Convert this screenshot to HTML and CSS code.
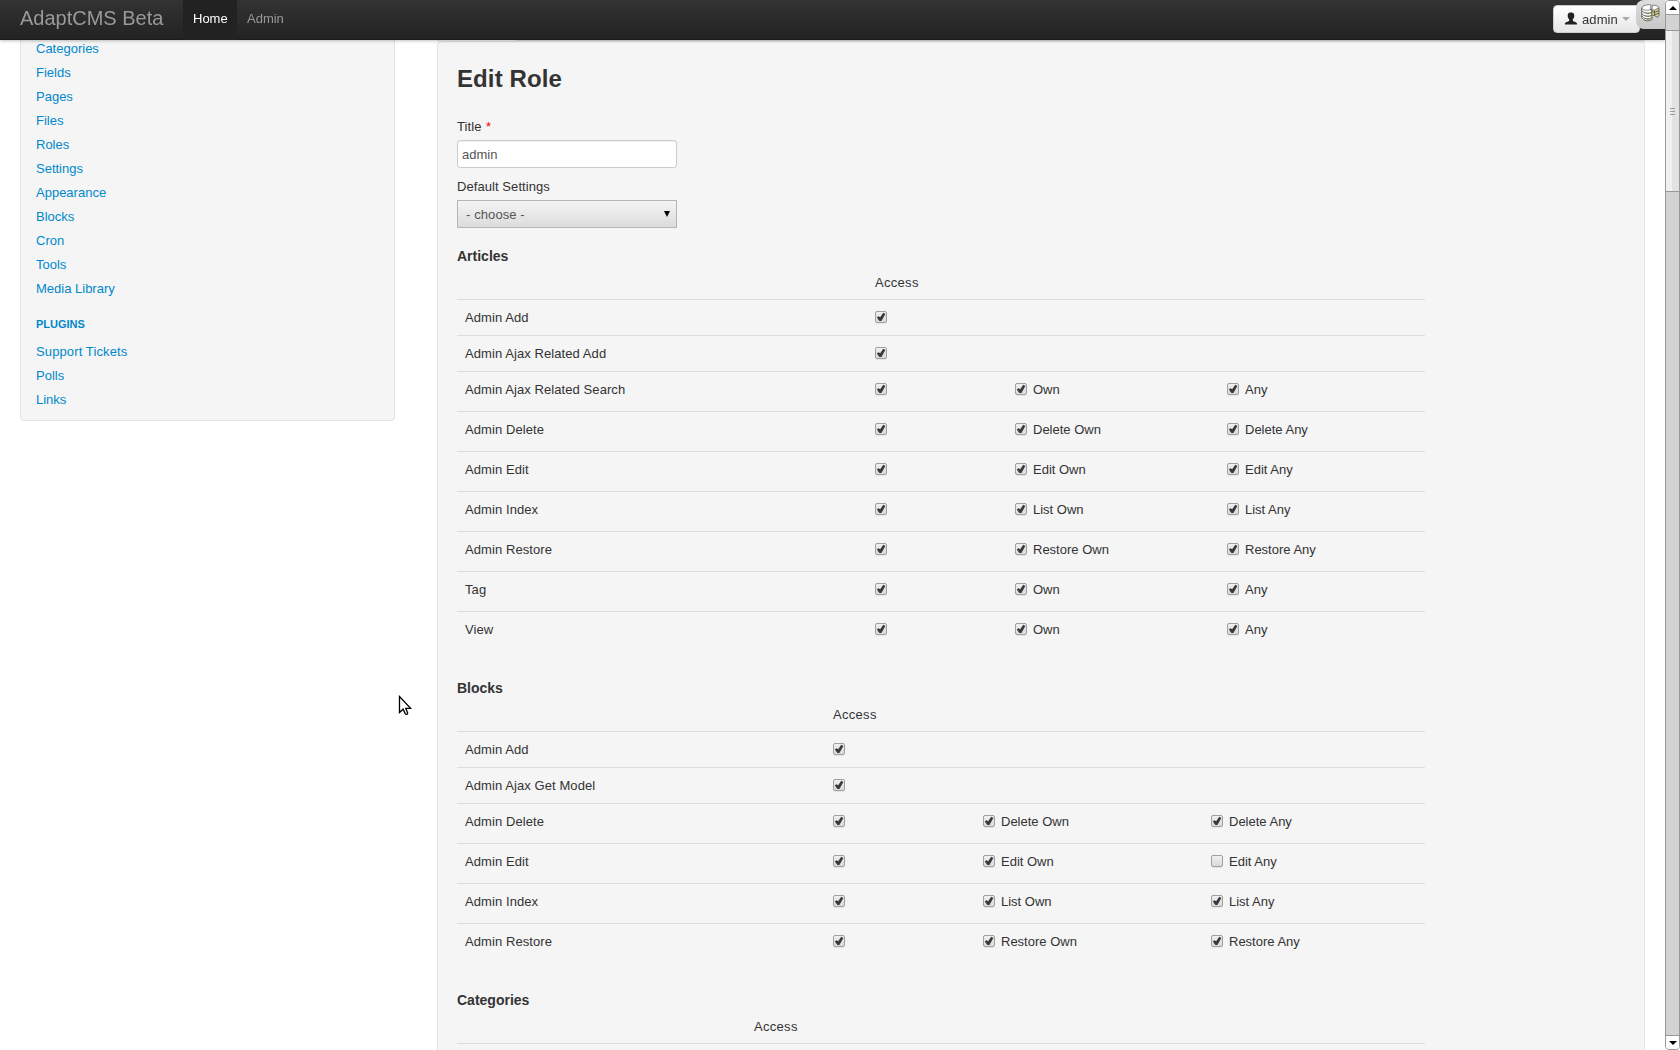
FILE: index.html
```html
<!DOCTYPE html>
<html lang="en">
<head>
<meta charset="utf-8">
<title>AdaptCMS Beta</title>
<link rel="stylesheet" href="styles.css">
</head>
<body>
<header class="navbar">
  <a class="brand">AdaptCMS Beta</a>
  <nav class="nav"><a class="active">Home</a><a>Admin</a></nav>
  <button class="user-btn" type="button">
    <svg width="14" height="14" viewBox="0 0 14 14"><path fill="#222" d="M6.600.6C4.300.6 3.600 2 3.700 4c.1 1.700.8 2.800 1.500 3.400v1.300C4.400 9.700.9 9.900.9 11.700v.9h12.200v-.9c0-1.800-3.500-2-4.300-3V7.400c.7-.6 1.400-1.700 1.500-3.400C10.400 2 9.500.6 7.400.6z"/></svg>
    <span>admin</span><i class="caret"></i>
  </button>
  <div class="debug-tab">
    <svg width="19" height="18" viewBox="0 0 19 18">
      <path fill="#fff" stroke="#555" stroke-width=".9" d="M.8 4v9.500c1.500 3.600 7.500 4 10.200 2.200V6z"/>
      <path fill="none" stroke="#b9b964" stroke-width="1.100" d="M4.500 8.800c2 .7 4.500.6 6 .1M4.500 11.800c2 .7 4.500.6 6 .1M4.500 14.800c2 .7 4.500.6 6 .1"/>
      <path fill="none" stroke="#555" stroke-width=".9" d="M.8 6.500c1.500 3 7.500 3.500 10.200 1.500M.8 9.500c1.500 3 7.500 3.500 10.200 1.500M.8 12c1.500 3 7.500 3.500 10.200 1.500"/>
      <path fill="#fff" stroke="#666" stroke-width=".8" d="M.8 4C1.500 1.500 6 .4 10 .9L9.500 5.700C6 6.800 1.500 6.300.8 4z"/>
      <path fill="#d4d483" stroke="#555" stroke-width=".8" d="M10.800 5.200l7.200-1.500v8l-1.500 1.600-3-1.700-2.700-.8z"/>
      <path fill="none" stroke="#555" stroke-width=".9" d="M11 7l2.500 1.500L18 6.500M13.500 11L18 9M13.500 6.500v5"/>
      <path fill="#fff" stroke="#666" stroke-width=".8" d="M11.500 1.200c3 0 6 .8 6.500 2.500l-4.500 2.500-2.700-1z"/>
    </svg>
  </div>
</header>

<div class="page">
  <aside class="sidebar">
    <ul>
      <li><a>Categories</a></li><li><a>Fields</a></li><li><a>Pages</a></li><li><a>Files</a></li>
      <li><a>Roles</a></li><li><a>Settings</a></li><li><a>Appearance</a></li><li><a>Blocks</a></li>
      <li><a>Cron</a></li><li><a>Tools</a></li><li><a>Media Library</a></li>
    </ul>
    <h5>Plugins</h5>
    <ul><li><a class="spaced">Support Tickets</a></li><li><a>Polls</a></li><li><a>Links</a></li></ul>
  </aside>

  <div class="content">
    <div class="tabs"><span class="tab-active"></span></div>
    <main class="well">
      <h2>Edit Role</h2>
      <form>
        <label class="field-label" for="title">Title <em>*</em></label>
        <input class="text-input" id="title" type="text" value="admin">
        <span class="field-label">Default Settings</span>
        <div class="select"><span>- choose -</span><i></i></div>

        <h4>Articles</h4>
        <div class="perms articles">
          <div class="row head"><span></span><span>Access</span></div>
          <div class="row"><span>Admin Add</span><label><input type="checkbox" checked></label></div>
          <div class="row"><span>Admin Ajax Related Add</span><label><input type="checkbox" checked></label></div>
          <div class="row tall"><span>Admin Ajax Related Search</span><label><input type="checkbox" checked></label><label><input type="checkbox" checked>Own</label><label><input type="checkbox" checked>Any</label></div>
          <div class="row tall"><span>Admin Delete</span><label><input type="checkbox" checked></label><label><input type="checkbox" checked>Delete Own</label><label><input type="checkbox" checked>Delete Any</label></div>
          <div class="row tall"><span>Admin Edit</span><label><input type="checkbox" checked></label><label><input type="checkbox" checked>Edit Own</label><label><input type="checkbox" checked>Edit Any</label></div>
          <div class="row tall"><span>Admin Index</span><label><input type="checkbox" checked></label><label><input type="checkbox" checked>List Own</label><label><input type="checkbox" checked>List Any</label></div>
          <div class="row tall"><span>Admin Restore</span><label><input type="checkbox" checked></label><label><input type="checkbox" checked>Restore Own</label><label><input type="checkbox" checked>Restore Any</label></div>
          <div class="row tall"><span>Tag</span><label><input type="checkbox" checked></label><label><input type="checkbox" checked>Own</label><label><input type="checkbox" checked>Any</label></div>
          <div class="row tall"><span>View</span><label><input type="checkbox" checked></label><label><input type="checkbox" checked>Own</label><label><input type="checkbox" checked>Any</label></div>
        </div>

        <h4>Blocks</h4>
        <div class="perms blocks">
          <div class="row head"><span></span><span>Access</span></div>
          <div class="row"><span>Admin Add</span><label><input type="checkbox" checked></label></div>
          <div class="row"><span>Admin Ajax Get Model</span><label><input type="checkbox" checked></label></div>
          <div class="row tall"><span>Admin Delete</span><label><input type="checkbox" checked></label><label><input type="checkbox" checked>Delete Own</label><label><input type="checkbox" checked>Delete Any</label></div>
          <div class="row tall"><span>Admin Edit</span><label><input type="checkbox" checked></label><label><input type="checkbox" checked>Edit Own</label><label><input type="checkbox">Edit Any</label></div>
          <div class="row tall"><span>Admin Index</span><label><input type="checkbox" checked></label><label><input type="checkbox" checked>List Own</label><label><input type="checkbox" checked>List Any</label></div>
          <div class="row tall"><span>Admin Restore</span><label><input type="checkbox" checked></label><label><input type="checkbox" checked>Restore Own</label><label><input type="checkbox" checked>Restore Any</label></div>
        </div>

        <h4>Categories</h4>
        <div class="perms categories">
          <div class="row head"><span></span><span>Access</span></div>
          <div class="row"></div>
        </div>
      </form>
    </main>
  </div>
</div>

<div class="scrollbar">
  <div class="sb-btn"><i class="up"></i></div>
  <div class="sb-gap"></div>
  <div class="sb-thumb"><i></i><i></i><i></i></div>
  <div class="sb-track"></div>
  <div class="sb-btn bottom"><i class="down"></i></div>
</div>

<svg class="cursor" width="15" height="22" viewBox="0 0 15 22"><path d="M1.500 1.500v16l3.600-3.300 2.300 4.900c.8.600 2.200.1 2.300-.8L7.800 13.300h4.800z" fill="#fff" stroke="#000" stroke-width="1.300"/></svg>
</body>
</html>
```
FILE: styles.css
```css
* { box-sizing: border-box; }
html, body { height: 100%; }
body {
  margin: 0;
  overflow: hidden;
  background: #fff;
  color: #333;
  font: 13px/20px "Liberation Sans", Arial, sans-serif;
}
ul, h2, h4, h5 { margin: 0; padding: 0; }
ul { list-style: none; }

.navbar {
  position: fixed;
  inset: 0 15px auto 0;
  z-index: 5;
  height: 40px;
  padding-left: 20px;
  display: flex;
  background: linear-gradient(#333, #222);
  box-shadow: 0 1px 3px rgba(0, 0, 0, .25), inset 0 -1px 0 rgba(0, 0, 0, .2);
  color: #999;
}
.brand { width: 163px; padding-top: 8px; font-size: 20px; white-space: nowrap; }
.nav { display: flex; flex: 1; }
.nav a { padding: 9px 10px 11px; }
.nav .active { width: 54px; background: #222; color: #fff; }
.user-btn {
  display: flex;
  align-items: center;
  width: 87px;
  height: 28px;
  margin: 5px 25px 0 0;
  padding: 0 0 0 10px;
  border: 1px solid #ccc;
  border-radius: 4px;
  background: linear-gradient(#fff, #e6e6e6);
  color: #333;
  font: inherit;
}
.user-btn svg { margin-bottom: 1px; }
.user-btn span { margin-left: 4px; padding-top: 2px; letter-spacing: .1px; }
.caret { margin-left: 4px; border: 4px solid transparent; border-top-color: #aaa; border-bottom: 0; }
.debug-tab {
  position: absolute;
  top: 0;
  right: 0;
  width: 29px;
  height: 29px;
  padding: 4px 0 0 5px;
  border-radius: 8px 0 0 8px;
  background: linear-gradient(#ddd, #c8c8c8);
}

.page { display: flex; align-items: flex-start; padding-left: 20px; }
.sidebar {
  width: 375px;
  height: 421px;
  margin-right: 42px;
  padding: 37px 15px 0;
  border: 1px solid #e3e3e3;
  border-radius: 4px;
  background: #f5f5f5;
}
.sidebar li { height: 24px; line-height: 20px; }
.sidebar a, .sidebar h5 { color: #08c; }
.sidebar ul:first-child { padding-top: 1px; }
.sidebar h5 { margin: 11px 0 8px; font-size: 11px; line-height: 20px; text-transform: uppercase; }
.sidebar .spaced { letter-spacing: .12px; }

.content { width: 1208px; }
.tabs { height: 41px; border-bottom: 1px solid #ddd; }
.tab-active { display: block; width: 79px; height: 41px; border: 1px solid #ddd; border-width: 0 1px; background: #f5f5f5; }
.well {
  height: 1030px;
  padding: 18px 0 0 19px;
  border: 1px solid #e3e3e3;
  border-radius: 4px;
  background: #f5f5f5;
}
h2 { height: 57px; font-size: 24px; line-height: 37px; letter-spacing: .1px; }
.field-label { display: block; height: 23px; letter-spacing: .07px; }
.field-label em { margin-left: 1px; color: #f00; font-style: normal; }
.text-input {
  display: block;
  width: 220px;
  height: 28px;
  margin-bottom: 9px;
  padding: 4px;
  border: 1px solid #ccc;
  border-radius: 3px;
  box-shadow: inset 0 1px 1px rgba(0, 0, 0, .075);
  color: #555;
  font: inherit;
}
.select {
  display: flex;
  align-items: center;
  justify-content: space-between;
  width: 220px;
  height: 28px;
  padding: 0 6px 0 8px;
  border: 1px solid #b5b5b5;
  background: linear-gradient(#f4f4f4, #dcdcdc);
  color: #555;
}
.select span { padding-top: 2px; letter-spacing: .1px; }
.select i { border: 3px solid transparent; border-top: 6px solid #000; border-bottom: 0; }

h4 { margin-top: 28px; font-size: 14px; line-height: 18px; }
.select + h4 { margin-top: 19px; }
.perms { width: 968px; line-height: 19px; }
.row { display: grid; height: 36px; padding-top: 8px; border-top: 1px solid #ddd; }
.row.tall { height: 40px; }
.row.head { height: 34px; border: 0; letter-spacing: .3px; }
.row > * { padding-left: 8px; white-space: nowrap; }
.row:not(.head) > span { letter-spacing: .08px; }
.articles .row { grid-template-columns: 410px 140px 212px 1fr; }
.blocks .row { grid-template-columns: 368px 150px 228px 1fr; }
.categories .row { grid-template-columns: 289px 1fr; }

.row label { display: flex; align-items: flex-start; }
input[type="checkbox"] {
  appearance: none;
  position: relative;
  flex: none;
  width: 12px;
  height: 12px;
  margin: 3px 6px 0 0;
  border: 1px solid #a0a0a0;
  border-radius: 2px;
  background: linear-gradient(#f0f0f0, #d9d9d9);
  box-shadow: 0 1px 0 #e4e4e4;
}
input[type="checkbox"]:checked::before {
  content: "";
  position: absolute;
  inset: 0;
  background: #3a3a3a;
  clip-path: polygon(8% 56%, 24% 42%, 42% 52%, 72% 8%, 94% 20%, 54% 90%, 34% 90%);
}

.scrollbar {
  position: fixed;
  inset: 0 0 0 auto;
  z-index: 6;
  display: flex;
  flex-direction: column;
  width: 15px;
  border: 1px solid #999;
  border-radius: 4px;
  background: #d3d3d3;
}
.sb-btn { display: flex; align-items: center; justify-content: center; height: 14px; border-bottom: 1px solid #999; border-radius: 3px 3px 0 0; background: #fff; }
.sb-btn.bottom { border-top: 1px solid #999; border-bottom: 0; border-radius: 0 0 3px 3px; }
.sb-gap { height: 15px; }
.sb-thumb {
  display: flex;
  flex-direction: column;
  align-items: center;
  justify-content: center;
  gap: 2px;
  height: 162px;
  border: 1px solid #999;
  border-width: 1px 0;
  background: linear-gradient(90deg, #f0f0f0 50%, #e2e2e2 50%);
}
.sb-thumb i { width: 5px; height: 1px; background: #999; }
.sb-track { flex: 1; }
.up, .down { border: 4px solid transparent; }
.up { border-top: 0; border-bottom-color: #000; }
.down { border-bottom: 0; border-top-color: #000; }

.cursor { position: fixed; left: 398px; top: 695px; z-index: 7; }
```
